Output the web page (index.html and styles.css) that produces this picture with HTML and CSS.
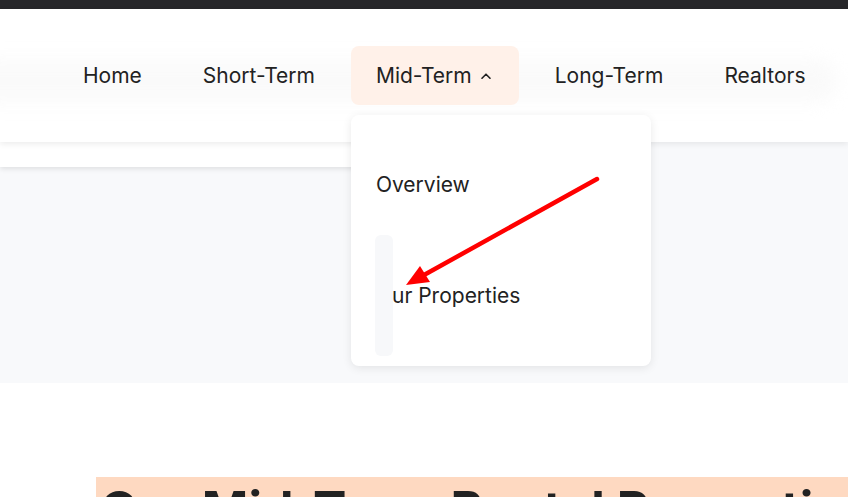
FILE: index.html
```html
<!DOCTYPE html>
<html lang="en">
<head>
    <meta charset="UTF-8">
    <title>Mid-Term Rentals</title>
    <meta name="viewport" content="width=device-width, initial-scale=1.0">
    <link rel="stylesheet" href="styles.css">
</head>
<body>
<div class="topbar"></div>

<header class="site-header">
    <div class="header-glow"></div>
    <nav class="main-nav">
        <a class="nav-link">Home</a>
        <a class="nav-link">Short-Term</a>
        <div class="nav-item">
            <a class="nav-link active">Mid-Term
                <svg class="caret" width="10" height="6" viewBox="0 0 10 6">
                    <polyline points="1,5.2 5,1.2 9,5.2" fill="none" stroke="#222" stroke-width="1.6" stroke-linecap="round" stroke-linejoin="round"/>
                </svg>
            </a>
            <div class="dropdown">
                <a class="dropdown-link">Overview</a>
                <a class="dropdown-link">Our Properties</a>
                <div class="dropdown-bar"></div>
            </div>
        </div>
        <a class="nav-link">Long-Term</a>
        <a class="nav-link">Realtors</a>
    </nav>
</header>

<section class="hero">
    <div class="subbar"></div>
</section>

<main class="content">
    <h1 class="section-title">Our Mid-Term Rental Properties</h1>
</main>

<svg class="annotation" width="848" height="497" viewBox="0 0 848 497">
    <line x1="597" y1="179" x2="424" y2="275" stroke="#ff0000" stroke-width="4.5" stroke-linecap="round"/>
    <polygon points="406,285 420,266 430,282" fill="#ff0000"/>
</svg>
</body>
</html>
```

FILE: styles.css
```css
* {
    box-sizing: border-box;
}

body {
    margin: 0;
    font-family: Inter, "Noto Sans", sans-serif;
    color: #222;
    background: #fff;
    overflow: hidden;
}

.topbar {
    height: 9px;
    background: #27272a;
}

.site-header {
    position: relative;
    z-index: 3;
    height: 133px;
    background: #fff;
    box-shadow: 0 2px 6px rgba(0, 0, 0, 0.08);
}

.header-glow {
    position: absolute;
    top: 50px;
    left: -30px;
    right: 10px;
    height: 44px;
    border-radius: 30px;
    background: #f6f6f6;
    filter: blur(8px);
    opacity: 0.5;
}

.main-nav {
    position: relative;
    display: flex;
    align-items: center;
    gap: 11px;
    height: 100%;
    padding-left: 58px;
    padding-bottom: 1px;
}

.nav-item {
    position: relative;
}

.nav-link {
    display: flex;
    align-items: center;
    gap: 9px;
    height: 59px;
    padding: 0 25px;
    border-radius: 8px;
    font-size: 21px;
    color: #222;
    cursor: pointer;
}

.nav-link.active {
    background: #fff1e9;
    padding-right: 28px;
}

.caret {
    margin-top: 1px;
}

.dropdown {
    position: absolute;
    top: 69px;
    left: 0;
    width: 300px;
    height: 251px;
    padding: 15px 0;
    background: #fff;
    border-radius: 8px;
    box-shadow: 0 2px 10px rgba(0, 0, 0, 0.09);
}

.dropdown-link {
    display: flex;
    align-items: center;
    height: 110.5px;
    padding-left: 25px;
    font-size: 21px;
    color: #222;
}

.dropdown-bar {
    position: absolute;
    top: 120px;
    left: 24px;
    width: 18px;
    height: 121px;
    border-radius: 6px;
    background: #f7f8fa;
}

.hero {
    position: relative;
    height: 241px;
    background: #f8f9fb;
}

.subbar {
    position: absolute;
    top: 0;
    left: 0;
    width: 520px;
    height: 25px;
    background: #fff;
    box-shadow: 0 2px 5px rgba(0, 0, 0, 0.1);
}

.content {
    padding-top: 94px;
    padding-left: 96px;
}

.section-title {
    margin: 0;
    padding: 2px 4px;
    white-space: nowrap;
    font-size: 50px;
    font-weight: 700;
    line-height: 1.2;
    background: #fed9c1;
    color: #222;
}

.annotation {
    position: absolute;
    top: 0;
    left: 0;
    z-index: 5;
    pointer-events: none;
}
```
